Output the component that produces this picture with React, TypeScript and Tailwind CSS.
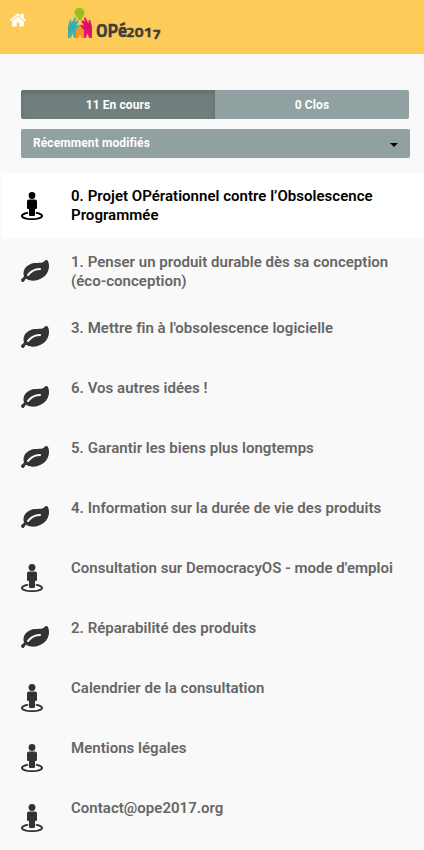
type IconKind = "person" | "leaf";

const topics: { title: string; icon: IconKind; tall?: boolean; active?: boolean }[] = [
  { title: "0. Projet OPérationnel contre l’Obsolescence Programmée", icon: "person", tall: true, active: true },
  { title: "1. Penser un produit durable dès sa conception (éco-conception)", icon: "leaf", tall: true },
  { title: "3. Mettre fin à l'obsolescence logicielle", icon: "leaf" },
  { title: "6. Vos autres idées !", icon: "leaf" },
  { title: "5. Garantir les biens plus longtemps", icon: "leaf" },
  { title: "4. Information sur la durée de vie des produits", icon: "leaf" },
  { title: "Consultation sur DemocracyOS - mode d'emploi", icon: "person" },
  { title: "2. Réparabilité des produits", icon: "leaf" },
  { title: "Calendrier de la consultation", icon: "person" },
  { title: "Mentions légales", icon: "person" },
  { title: "Contact@ope2017.org", icon: "person" },
];

function HomeIcon() {
  return (
    <svg className="size-[18px]" viewBox="0 0 1792 1792" fill="currentColor">
      <path d="M1472 992v480q0 26-19 45t-45 19h-384v-384h-256v384h-384q-26 0-45-19t-19-45v-480q0-1 .5-3t.5-3l575-474 575 474q1 2 1 6zm223-69l-62 74q-8 9-21 11h-3q-13 0-21-7l-692-577-692 577q-12 8-24 7-13-2-21-11l-62-74q-8-10-7-23.5t11-21.5l719-599q32-26 76-26t76 26l244 204v-195q0-14 9-23t23-9h192q14 0 23 9t9 23v408l219 182q10 8 11 21.5t-7 23.5z" />
    </svg>
  );
}

function LeafIcon() {
  return (
    <svg className="size-7" viewBox="0 0 1792 1792" fill="currentColor">
      <path d="M1280 832q0-26-19-45t-45-19q-172 0-318 49.5t-259.5 134-235.5 219.5q-19 21-19 45 0 26 19 45t45 19q24 0 45-19 27-24 74-71t67-66q137-124 268.5-176t313.5-52q26 0 45-19t19-45zm512-198q0 95-20 193-46 224-184.5 383t-357.5 268q-214 108-438 108-148 0-286-47-15-5-88-42t-96-37q-16 0-39.5 32t-45 70-52.5 70-60 32q-43 0-63.5-17.5t-45.5-59.5q-2-4-6-11t-5.5-10-3-9.5-1.5-13.5q0-35 31-73.5t68-65.5 68-56 31-48q0-4-14-38t-16-44q-9-51-9-104 0-115 43.5-220t119-184.5 170.5-139 204-95.5q55-18 145-25.5t179.5-9 178.5-6 163.5-24 113.5-56.5l29.5-29.5 29.5-28 27-20 36.5-16 43.5-4.5q39 0 70.5 46t47.5 112 24 124 8 96z" />
    </svg>
  );
}

function PersonIcon() {
  return (
    <svg className="h-7 w-[22px]" viewBox="0 0 22 28" fill="currentColor">
      <circle cx="11" cy="3.500" r="3.400" />
      <path d="M8 7.500h6a2 2 0 0 1 2 2V16a1 1 0 0 1-1 1h-1v6a1 1 0 0 1-1 1H9a1 1 0 0 1-1-1v-6H7a1 1 0 0 1-1-1V9.500a2 2 0 0 1 2-2z" />
      <path
        fillRule="evenodd"
        d="M6.300 20.100C2.700 20.700 0 22 0 24c0 2.600 5.100 4 11 4s11-1.400 11-4c0-2-2.700-3.300-6.300-3.900a.8.8 0 0 0-.3 1.700c2.600.5 4.200 1.400 4.700 2.100-.9 1-4.300 2.400-9.100 2.400s-8.200-1.400-9.100-2.400c.5-.7 2.100-1.600 4.700-2.100a.8.8 0 0 0-.3-1.700z"
      />
    </svg>
  );
}

function Logo() {
  return (
    <div className="flex">
      <svg className="h-[32px] w-[25px]" viewBox="0 0 25 32">
        <path d="M11.500 0c3 0 5 2 5 4.700 0 3-2.300 3.800-3 7.300h-3.200C9.900 8.500 6.500 7.700 6.500 4.700 6.500 2 8.700 0 11.500 0z" fill="#95c11f" />
        <path d="M0 30V18.500l1.800-6.700 1.600.2v3.500L6.800 9.300l1.400.6-1 3.600 2.600-1.200.9.900-2.500 4.500 3-1.200.8 1.500-3.500 4-.5 8H6l-1.200-4.500L2.700 30z" fill="#43b3ae" />
        <path d="M24 30V18.500l-1.800-6.700-1.600.2v3.500l-3.400-6.200-1.400.6 1 3.600-2.600-1.200-.9.900 2.500 4.500-3-1.200-.8 1.500 3.500 4 .5 8h2l1.200-4.500 2.100 4.500z" fill="#e5136f" />
        <path d="M2 16.500l3-3.500 3 6.500-4.500 4L0 26v-7zM22 16.500l-3-3.500-3 6.500 4.500 4L24 26v-7z" fill="#000000" opacity=".06" />
        <path d="M8 30v-7.500l1.800-2L12 17.800l2.200 2.700 1.800 2V30h-2.400L12 26.500 10.400 30z" fill="#f7941d" />
      </svg>
      <div className="ml-[3px] mt-3 flex h-5 items-baseline whitespace-nowrap font-['Titillium_Web','Open_Sans',sans-serif] font-bold leading-5 text-[#3d3d3b] [-webkit-text-stroke:0.3px_#3d3d3b]">
        <span className="w-[29.500px] origin-left scale-x-[0.96] text-[18.500px]">OPé</span>
        <span className="flex origin-left scale-x-[1.12] items-baseline text-[14px]">
          <span>201</span>
          <span className="translate-y-[2px]">7</span>
        </span>
      </div>
    </div>
  );
}

export default function App() {
  return (
    <div className="h-[850px] overflow-hidden bg-[#f9f9f9] font-['Roboto',sans-serif]">
      <header className="flex h-[54px] bg-[#fdcb58]">
        <a className="ml-[9px] mt-[11px] size-[18px] text-white" aria-label="Accueil">
          <HomeIcon />
        </a>
        <div className="ml-[41px] mt-2">
          <Logo />
        </div>
      </header>

      <div className="ml-[21px] mt-9 flex h-[29px] w-[388px] overflow-hidden rounded-[2px] text-center text-xs font-bold leading-[28px] tracking-[0.1px] text-white">
        <button className="w-1/2 bg-[#717e7e] shadow-[inset_0_3px_5px_rgba(0,0,0,0.125)]">11 En cours</button>
        <button className="w-1/2 bg-[#91a0a0]">0 Clos</button>
      </div>
      <button className="ml-[21px] mt-[10px] flex h-[29px] w-[389px] justify-between rounded-[2px] bg-[#91a0a0] px-3 text-xs font-bold leading-[28px] tracking-[0.1px] text-white">
        <span>Récemment modifiés</span>
        <span className="mt-[14px] size-0 border-x-4 border-t-4 border-x-transparent border-t-black" />
      </button>

      <nav className="ml-px mt-[15px]">
        {topics.map((topic) => (
          <a
            key={topic.title}
            className={`flex pl-5 ${topic.tall ? "h-[66px]" : "h-[60px]"} ${topic.active ? "bg-white text-black" : "text-[#666666]"}`}
          >
            <span className={`w-[50px] ${topic.active ? "text-black" : "text-[#333333]"} ${topic.icon === "leaf" ? "pt-[17px]" : "pt-[19px]"}`}>
              {topic.icon === "leaf" ? <LeafIcon /> : <PersonIcon />}
            </span>
            <span className="w-[335px] pt-[14px] text-[15px] font-semibold leading-[19px] tracking-[0.028px]">{topic.title}</span>
          </a>
        ))}
      </nav>
    </div>
  );
}
